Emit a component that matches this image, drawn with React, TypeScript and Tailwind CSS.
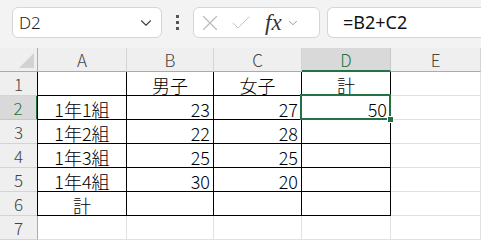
import { ChevronDown, X, Check } from 'lucide-react'

const COLS = ['A', 'B', 'C', 'D', 'E']
const COL_W = ['w-[89px]', 'w-[87px]', 'w-[88px]', 'w-[89px]', 'w-[90px]']

type Cell = { v?: string; align?: 'left' | 'center' | 'right' }

const DATA: Cell[][] = [
  [{}, { v: '男子', align: 'center' }, { v: '女子', align: 'center' }, { v: '計', align: 'center' }, {}],
  [{ v: '1年1組', align: 'center' }, { v: '23', align: 'right' }, { v: '27', align: 'right' }, { v: '50', align: 'right' }, {}],
  [{ v: '1年2組', align: 'center' }, { v: '22', align: 'right' }, { v: '28', align: 'right' }, {}, {}],
  [{ v: '1年3組', align: 'center' }, { v: '25', align: 'right' }, { v: '25', align: 'right' }, {}, {}],
  [{ v: '1年4組', align: 'center' }, { v: '30', align: 'right' }, { v: '20', align: 'right' }, {}, {}],
  [{ v: '計', align: 'center' }, {}, {}, {}, {}],
  [{}, {}, {}, {}, {}],
]

const SHEET_FONT = "font-['Noto_Sans_CJK_JP',sans-serif] font-light"

function FormulaBar() {
  return (
    <div className="flex h-[48px] items-start bg-[#f3f3f3] pt-[7px]">
      <div className="ml-[12px] flex h-[31px] w-[150px] items-center justify-between rounded-[6px] border border-[#d6d6d6] bg-white pl-[6px] pr-[6px]">
        <span className="font-['Noto_Sans',sans-serif] text-[17px] font-light text-[#222]">D2</span>
        <ChevronDown className="h-[18px] w-[18px] text-[#444]" strokeWidth={1.5} />
      </div>
      <div className="flex h-[31px] w-[31px] flex-col items-center justify-center gap-[3px]">
        <span className="h-[3px] w-[3px] bg-[#555]" />
        <span className="h-[3px] w-[3px] bg-[#555]" />
        <span className="h-[3px] w-[3px] bg-[#555]" />
      </div>
      <div className="flex h-[31px] w-[127px] items-center rounded-[6px] border border-[#d6d6d6] bg-white pl-[3px]">
        <X className="h-[26px] w-[26px] text-[#b8b8b8]" strokeWidth={1} />
        <Check className="ml-[6px] h-[24px] w-[24px] text-[#c4c4c4]" strokeWidth={1} />
        <span className="ml-[12px] font-['Liberation_Serif',serif] text-[23px] italic leading-none text-[#333]">fx</span>
        <ChevronDown className="ml-[4px] h-[14px] w-[14px] text-[#888]" strokeWidth={1.5} />
      </div>
      <div className="ml-[7px] flex h-[31px] flex-1 items-center rounded-l-[6px] border border-r-0 border-[#d6d6d6] bg-white pl-[15px]">
        <span className="font-['Noto_Sans',sans-serif] text-[18px] text-[#111]">=B2+C2</span>
      </div>
    </div>
  )
}

function Grid() {
  return (
    <div className={`flex flex-col ${SHEET_FONT}`}>
      <div className="flex h-[24px]">
        <div className="relative w-[38px] border-r border-b border-[#ababab] bg-[#efefef]">
          <div className="absolute bottom-[3px] right-[3px] h-0 w-0 border-b-[15px] border-l-[15px] border-b-[#d2d2d2] border-l-transparent" />
        </div>
        {COLS.map((c, i) => {
          const sel = c === 'D'
          return (
            <div
              key={c}
              className={`${COL_W[i]} flex items-center justify-center border-r pt-[1px] text-[17px] ${
                sel
                  ? 'border-b-2 border-r-[#c8c8c8] border-b-[#217346] bg-[#d9d9d9] text-[#217346]'
                  : 'border-b border-r-[#d4d4d4] border-b-[#ababab] bg-[#efefef] text-[#444]'
              }`}
            >
              {c}
            </div>
          )
        })}
      </div>
      {DATA.map((row, r) => {
        const rowSel = r === 1
        return (
          <div key={r} className="flex h-[24px]">
            <div
              className={`flex w-[38px] items-center justify-center border-b text-[17px] ${
                rowSel
                  ? 'border-r-2 border-b-[#c8c8c8] border-r-[#217346] bg-[#d9d9d9] text-[#217346]'
                  : 'border-r border-b-[#d4d4d4] border-r-[#ababab] bg-[#efefef] text-[#444]'
              }`}
            >
              {r + 1}
            </div>
            {row.map((cell, c) => {
              const inTable = r < 6 && c < 4
              const sel = r === 1 && c === 3
              const first = c === 0 && inTable
              return (
                <div
                  key={c}
                  className={`${first ? 'w-[90px] -ml-px border-l border-l-black' : COL_W[c]} relative flex items-center px-[3px] pt-[2px] text-[18px] leading-none text-black ${
                    inTable ? 'border-r border-b border-black' : 'border-r border-b border-[#e1e1e1]'
                  } ${r === 5 && c === 4 ? 'border-b-[#e1e1e1]' : ''} ${
                    cell.align === 'center' ? 'justify-center' : cell.align === 'right' ? 'justify-end' : 'justify-start'
                  }`}
                >
                  {cell.v}
                  {sel && (
                    <div className="pointer-events-none absolute -top-[2px] -left-[2px] z-10 h-[26px] w-[91px] border-2 border-[#217346]">
                      <div className="absolute -right-[5px] -bottom-[5px] h-[7px] w-[7px] border border-white bg-[#217346]" />
                    </div>
                  )}
                </div>
              )
            })}
          </div>
        )
      })}
    </div>
  )
}

export default function App() {
  return (
    <div className="h-[241px] w-[481px] overflow-hidden bg-white">
      <FormulaBar />
      <Grid />
    </div>
  )
}
